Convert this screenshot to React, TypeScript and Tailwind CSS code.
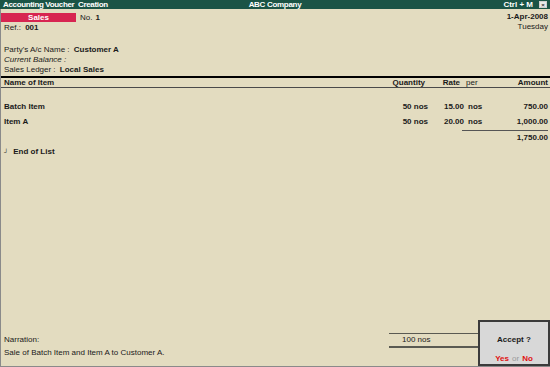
import React from "react";

const items = [
  { name: "Batch Item", qty: "50 nos", rate: "15.00", per: "nos", amount: "750.00" },
  { name: "Item A", qty: "50 nos", rate: "20.00", per: "nos", amount: "1,000.00" },
];

function ItemRow({ item }: { item: (typeof items)[number] }) {
  return (
    <div className="flex h-[15px] items-center font-bold">
      <div className="flex-1 pl-[3px]">{item.name}</div>
      <div className="w-[60px] pr-[1px] text-right">{item.qty}</div>
      <div className="w-[35px] text-right">{item.rate}</div>
      <div className="w-[20px] pl-[4px]">{item.per}</div>
      <div className="w-[66px] pr-[2px] text-right">{item.amount}</div>
    </div>
  );
}

export default function App() {
  return (
    <div className="relative flex h-[367px] w-[550px] flex-col bg-[#e3dcc0] font-['Liberation_Sans',Arial,sans-serif] text-[8px] leading-none text-[#1a1a1a]">
      {/* title bar */}
      <div className="flex h-[9px] items-center bg-[#1b5446] px-[3px] font-bold text-white">
        <div className="flex-1 tracking-[-0.35px]">Accounting Voucher&nbsp; Creation</div>
        <div className="flex-1 text-center tracking-[-0.3px]">ABC Company</div>
        <div className="flex flex-1 items-center justify-end gap-[6px]">
          <span>Ctrl + M</span>
          <span className="flex h-[7px] w-[8px] items-center justify-center border border-[#cfcfcf] bg-[#e8e8e8] text-[6px] text-[#333]">
            ×
          </span>
        </div>
      </div>

      <div className="flex flex-1 flex-col border-b border-l border-[#8a8a8a]">
        {/* voucher header */}
        <div className="flex justify-between pr-[2px] pt-[4px]">
          <div>
            <div className="flex h-[9px] items-center">
              <div className="flex h-[9px] w-[75px] items-center justify-center bg-[#d72551] font-bold text-white">
                Sales
              </div>
              <span className="ml-[4px]">No.</span>
              <span className="ml-[3px] font-bold">1</span>
            </div>
            <div className="mt-[2px] pl-[3px]">
              Ref.: <span className="ml-[2px] font-bold">001</span>
            </div>
          </div>
          <div className="text-right">
            <div className="font-bold">1-Apr-2008</div>
            <div className="mt-[2px]">Tuesday</div>
          </div>
        </div>

        <div className="mt-[14px] flex flex-col gap-[2px] pl-[3px]">
          <div>
            Party's A/c Name : <span className="ml-[2px] font-bold">Customer A</span>
          </div>
          <div className="italic">Current Balance :</div>
          <div>
            Sales Ledger : <span className="ml-[2px] font-bold">Local Sales</span>
          </div>
        </div>

        {/* column header */}
        <div className="mt-[2px] flex h-[12px] items-center border-b border-t-2 border-b-[#4a4a4a] border-t-black font-bold">
          <div className="flex-1 pl-[3px]">Name of Item</div>
          <div className="w-[60px] pr-[4px] text-right">Quantity</div>
          <div className="w-[35px] pr-[4px] text-right">Rate</div>
          <div className="w-[20px] pl-[2px] font-normal">per</div>
          <div className="w-[66px] pr-[2px] text-right">Amount</div>
        </div>

        <div className="mt-[11px]">
          {items.map((it) => (
            <ItemRow key={it.name} item={it} />
          ))}
        </div>
        <div className="flex justify-end">
          <div className="mr-[2px] mt-[1px] w-[86px] border-t border-[#555] pt-[3px] text-right font-bold">
            1,750.00
          </div>
        </div>

        <div className="mt-[6px] flex items-center pl-[3px] font-bold">
          <span className="text-[6px]">┘</span>
          <span className="ml-[5px]">End of List</span>
        </div>

        {/* footer */}
        <div className="mt-auto flex items-end">
          <div className="flex-1 pb-[9px] pl-[3px]">
            <div>Narration:</div>
            <div className="mt-[5px]">Sale of Batch Item and Item A to Customer A.</div>
          </div>
          <div className="mb-[18px] w-[89px] border-b-2 border-t border-[#5a5a52] py-[2px] pl-[13px]">
            100 nos
          </div>
          <div className="flex h-[46px] w-[72px] flex-col items-center border-2 border-[#3b3b3b] bg-[#d8d8d8]">
            <div className="mt-[14px] font-bold">Accept ?</div>
            <div className="mt-auto mb-[1px] font-bold">
              <span className="text-[#e01010]">Yes</span>
              <span className="mx-[3px] font-normal text-[#9a9a9a]">or</span>
              <span className="text-[#e01010]">No</span>
            </div>
          </div>
        </div>
      </div>
    </div>
  );
}
